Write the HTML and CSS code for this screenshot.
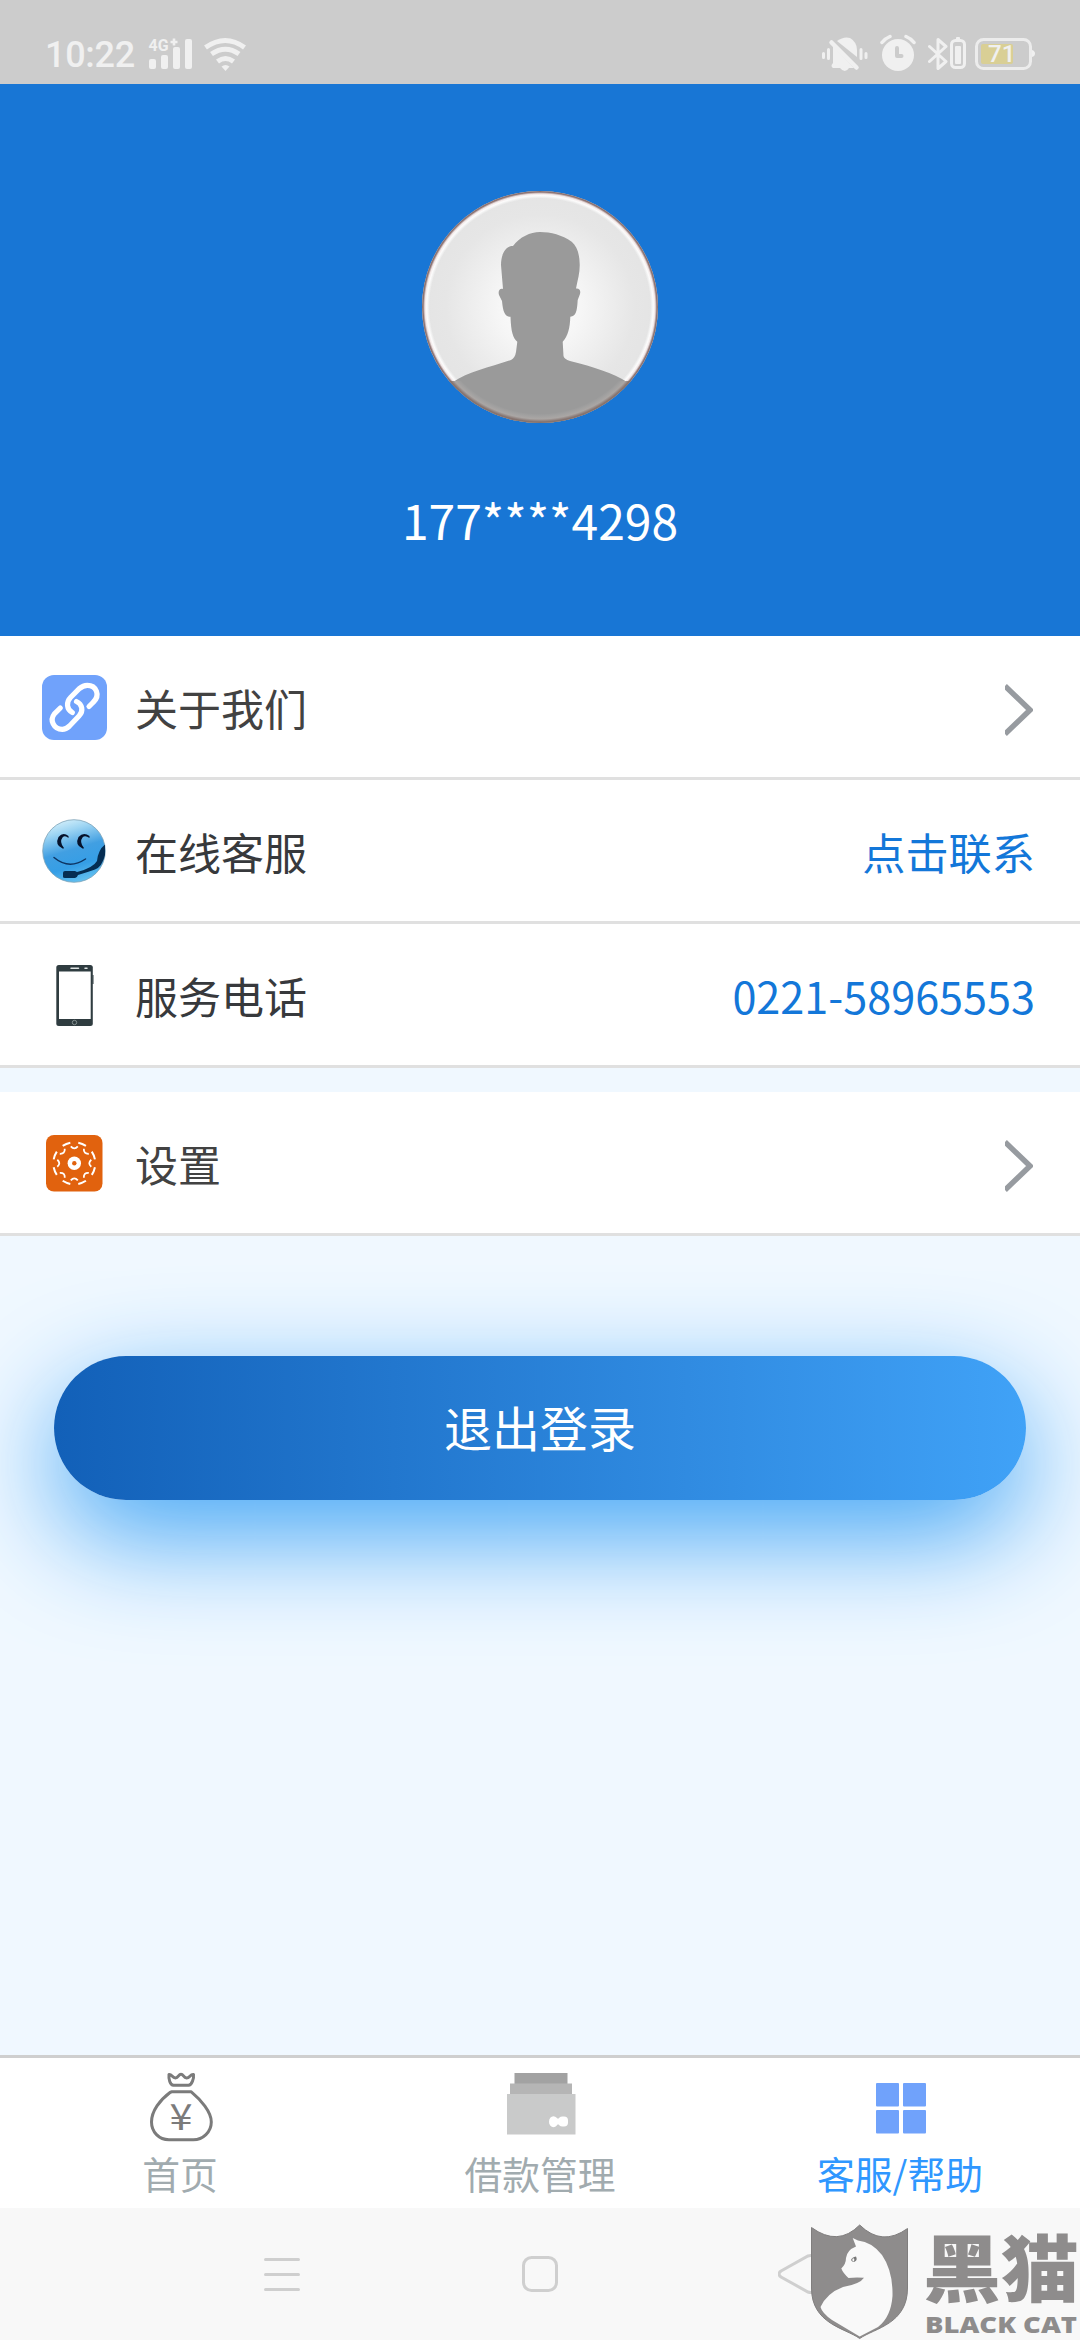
FILE: index.html
```html
<!DOCTYPE html>
<html lang="zh-CN">
<head>
    <meta charset="UTF-8">
    <meta name="viewport" content="width=device-width, initial-scale=1.0">
    <title>客服/帮助</title>
    <link rel="stylesheet" href="styles.css">
</head>
<body>
    <div class="status-bar">
        <span class="time">10:22</span>
        <svg class="signal" width="45" height="40" viewBox="148 34 45 40">
            <text class="net" x="148.5" y="51" textLength="20" lengthAdjust="spacingAndGlyphs">4G</text>
            <path d="M174 38.500v7M170.500 42h7" stroke="#f0f0f0" stroke-width="2.600"/>
            <rect x="149" y="59" width="7" height="10" rx="2"/>
            <rect x="161" y="55" width="7" height="14" rx="2"/>
            <rect x="173" y="47" width="7" height="22" rx="2"/>
            <rect x="185" y="39" width="7" height="30" rx="2"/>
        </svg>
        <svg class="wifi" width="44" height="40" viewBox="203 34 44 40">
            <g fill="none" stroke="#f0f0f0" stroke-width="5">
                <path d="M205.500 47.500Q225.500 33.500 244.500 47.500"/>
                <path d="M211.500 54Q225.500 44.500 239 54"/>
                <path d="M217.500 61.500Q225.500 55.500 233.500 61.500"/>
            </g>
            <path d="M221.500 66.500Q225.500 63.500 229.500 66.500L225.500 71z"/>
        </svg>

        <div class="status-right">
            <svg width="46" height="40" viewBox="822 34 46 40">
                <path d="M837 41Q844 36 850 38Q857 42 857 50V57z"/>
                <path d="M833 46L854 68Q850 68 849 68Q845 74 840 68H833Q830 66 833 63z"/>
                <path d="M831.500 42.500L856.500 67.500" stroke="#f0f0f0" stroke-width="4.500" stroke-linecap="round"/>
                <path d="M823.500 53.500v4M828.500 49.500v9M861 49.500v9M866 53.500v4" stroke="#f0f0f0" stroke-width="3" stroke-linecap="round"/>
            </svg>
            <svg width="36" height="40" viewBox="880 34 36 40">
                <circle cx="898" cy="55" r="16"/>
                <path d="M882 42.500Q885 38.500 890 36.500M914 42.500Q911 38.500 906 36.500" fill="none" stroke="#f0f0f0" stroke-width="3.500" stroke-linecap="round"/>
                <path d="M897 48v8h4.500" fill="none" stroke="#ccc" stroke-width="4" stroke-linecap="round" stroke-linejoin="round"/>
            </svg>
            <svg width="38" height="40" viewBox="928 34 38 40">
                <path d="M929.500 46.500L946 61.500L938 68.500V39.500L946 46.500L929.500 61.500" fill="none" stroke="#f0f0f0" stroke-width="3" stroke-linejoin="round" stroke-linecap="round"/>
                <rect x="951.500" y="40.500" width="13" height="27" rx="4" fill="none" stroke="#f0f0f0" stroke-width="3"/>
                <rect x="956" y="37" width="4" height="4" rx="1"/>
                <rect x="955" y="46" width="6" height="18" rx="1"/>
            </svg>
            <svg class="battery" width="60" height="40" viewBox="975 34 60 40">
                <rect x="976.500" y="39.500" width="54" height="29" rx="7" fill="none" stroke="#ececec" stroke-width="3"/>
                <rect x="981" y="44" width="32" height="20" rx="2" fill="#d9cf95"/>
                <path d="M1032 50q3 1 3 3.500t-3 3.500z"/>
                <text class="percent" x="988" y="62">71</text>
            </svg>
        </div>
    </div>

    <div class="profile">
        <svg class="avatar" width="236" height="232" viewBox="0 0 236 232">
            <defs>
                <radialGradient id="face-bg">
                    <stop offset="0" stop-color="#ffffff"/>
                    <stop offset="0.35" stop-color="#f6f6f6"/>
                    <stop offset="0.8" stop-color="#e6e6e6"/>
                    <stop offset="1" stop-color="#e4e4e4"/>
                </radialGradient>
                <radialGradient id="rim">
                    <stop offset="0.935" stop-color="#fff" stop-opacity="0"/>
                    <stop offset="0.96" stop-color="#fff" stop-opacity="0.9"/>
                    <stop offset="0.975" stop-color="#f3e8e8" stop-opacity="0.9"/>
                    <stop offset="0.99" stop-color="#8d7474"/>
                    <stop offset="1" stop-color="#8a7272"/>
                </radialGradient>
                <radialGradient id="rim-low">
                    <stop offset="0.92" stop-color="#aaa" stop-opacity="0"/>
                    <stop offset="0.965" stop-color="#aaa6a4"/>
                    <stop offset="0.99" stop-color="#85736f"/>
                </radialGradient>
                <clipPath id="avatar-clip"><ellipse cx="118" cy="116" rx="118" ry="116"/></clipPath>
                <clipPath id="low-clip"><rect x="0" y="190" width="236" height="42"/></clipPath>
            </defs>
            <ellipse cx="118" cy="116" rx="118" ry="116" fill="url(#face-bg)"/>
            <ellipse cx="118" cy="116" rx="118" ry="116" fill="url(#rim)"/>
            <path clip-path="url(#avatar-clip)" fill="#9a9a9a" d="M118 41C108 41 98 46 91 55C83 55 79 64 79 74L81 98C77 97 76 101 77 104L80 110C81 121 83 126 88.500 125.700C89 141 91 147 95.300 150.700L94 161Q93 167 89 169C68 176 46 181 31 191L10 232H226L205 191C191 182 172 176 148 170Q142 168 141.500 165L140.700 150.700C146 145 148 137 148.300 125.700C154 125 155 121 155.700 109L158 103C159 99 157 97 154 97.500C156 88 158 81 157.700 73C157.500 63 155 55 149.700 50.700C140 44 129 41 118 41Z"/>
            <ellipse clip-path="url(#low-clip)" cx="118" cy="116" rx="118" ry="116" fill="url(#rim-low)"/>
        </svg>
        <div class="phone">177****4298</div>
    </div>

    <div class="menu">
        <div class="row">
            <svg class="row-icon" viewBox="0 0 66 66">
                <rect x="0" y="1" width="65" height="65" rx="12" fill="#70a2fb"/>
                <g fill="none" stroke="#fff" stroke-width="5.200" stroke-linecap="round">
                    <path d="M47 32.500L51 28.500C59 21 54 11.300 45.300 11.300Q41 11.300 37.500 14.500L28.500 23.500C24 28 24.500 35.500 30.300 38.500"/>
                    <path d="M34.500 27.500C40 30 42 37 37 42L27.500 52Q24 55.300 20.300 55.300C11.500 55.300 7.500 46 12.300 40L18.300 34"/>
                </g>
            </svg>
            <span class="label">关于我们</span>
            <svg class="arrow" viewBox="0 0 28 54"><path d="M0 3L25 27L0 51" /></svg>
        </div>
        <div class="row">
            <svg class="row-icon" viewBox="0 0 66 66">
                <defs>
                    <linearGradient id="smile-bg" x1="0.25" y1="0" x2="0.55" y2="1">
                        <stop offset="0" stop-color="#d8f1fb"/>
                        <stop offset="0.2" stop-color="#9ed5f3"/>
                        <stop offset="0.5" stop-color="#419fe2"/>
                        <stop offset="0.75" stop-color="#359ee6"/>
                        <stop offset="1" stop-color="#62c0f0"/>
                    </linearGradient>
                </defs>
                <circle cx="32" cy="33" r="31.3" fill="url(#smile-bg)" stroke="#7fa3b8" stroke-width="0.8"/>
                <path fill="#06122b" d="M26.500 18Q21 13.500 16.500 19Q12.500 27 20.500 30.500Q22 30.500 22 30Q17 24 20.500 19.500Q23 17 26.500 20zM47.500 18Q41.500 13.500 36.500 19Q32.500 27 40.500 30.500Q42 30.500 42 30Q37 24 40.500 19.500Q43 17 47.500 20z"/>
                <path fill="none" stroke="#0e3563" stroke-width="1.500" stroke-linecap="round" d="M12 39.500Q27 52 43.500 41"/>
                <path fill="#052d52" d="M63 26.500Q56 32 55 43Q51 50 35 54L33 53H23Q21 53 21 55V59Q21 60 23 60H33Q35 60 36 57Q46 54 53 51.500Q60 49 63 37z"/>
            </svg>
            <span class="label dark">在线客服</span>
            <span class="value">点击联系</span>
        </div>
        <div class="row">
            <svg class="row-icon" viewBox="0 0 66 66">
                <rect x="14.300" y="3" width="36.500" height="61" rx="2.500" fill="#2f3c40"/>
                <rect x="50.500" y="13" width="1" height="9" fill="#2f3c40"/>
                <rect x="17" y="9.500" width="31.700" height="47.500" fill="#fff"/>
                <path d="M29 6.300h7.500M43 6.300h2" stroke="#dfe4e4" stroke-width="1.500" stroke-linecap="round"/>
                <circle cx="32.500" cy="60.500" r="2.200" fill="none" stroke="#8c9797" stroke-width="0.900"/>
            </svg>
            <span class="label dark">服务电话</span>
            <span class="value">0221-58965553</span>
        </div>
    </div>

    <div class="menu second">
        <div class="row">
            <svg class="row-icon" viewBox="0 0 66 66">
                <rect x="4" y="5" width="56.500" height="56.500" rx="8" fill="#e1620e"/>
                <g transform="translate(32.300 33.300)">
                    <circle r="21" fill="none" stroke="#fff" stroke-width="2" pathLength="80" stroke-dasharray="5 5" stroke-dashoffset="-2.500"/>
                    <g fill="none" stroke="#fff" stroke-width="1.800">
                        <path id="tooth" d="M-3.500-17Q0-13 3.500-17"/>
                        <use href="#tooth" transform="rotate(45)"/>
                        <use href="#tooth" transform="rotate(90)"/>
                        <use href="#tooth" transform="rotate(135)"/>
                        <use href="#tooth" transform="rotate(180)"/>
                        <use href="#tooth" transform="rotate(225)"/>
                        <use href="#tooth" transform="rotate(270)"/>
                        <use href="#tooth" transform="rotate(315)"/>
                    </g>
                    <circle r="6.700" fill="#fff"/>
                    <circle r="2.200" fill="#e1620e"/>
                </g>
            </svg>
            <span class="label">设置</span>
            <svg class="arrow" viewBox="0 0 28 54"><path d="M0 3L25 27L0 51" /></svg>
        </div>
    </div>

    <button class="logout">退出登录</button>

    <div class="tab-bar">
        <div class="tab">
            <svg width="72" height="72" viewBox="0 0 72 72">
                <g fill="none" stroke="#7b7b7b" stroke-width="3" stroke-linejoin="round">
                    <path d="M25 2.500C28 2 28 6 31.500 6C34.500 6 34.500 2.200 37 2.200S39.500 6 42.500 6C46 6 46 2 49.500 2.500C50 6 48 13 44.500 13.300H29.500C26 13 24.500 7 25 2.500Z"/>
                    <path d="M28 19.700H47C57 28 67.300 40 67.300 50C67.300 60 59 67.700 49.300 67.700H25C15 67.700 7.500 60 7.500 50C7.500 39 16 28 26 20.500Z"/>
                </g>
                <text class="yen" x="25.5" y="58" textLength="23" lengthAdjust="spacingAndGlyphs">¥</text>
            </svg>
            <span>首页</span>
        </div>
        <div class="tab">
            <svg width="72" height="72" viewBox="0 0 72 72">
                <rect x="10.500" y="1" width="53" height="11" fill="#a2a2a2"/>
                <rect x="6" y="11.500" width="62" height="11" fill="#b5b5b5"/>
                <rect x="3" y="22" width="68.500" height="40.500" fill="#c9caca"/>
                <ellipse cx="49.500" cy="49.700" rx="4.500" ry="5.500" fill="#fff"/>
                <rect x="52" y="46.500" width="6" height="6" fill="#fff"/>
                <rect x="54.500" y="44.500" width="9.500" height="10" rx="4" fill="#fff"/>
            </svg>
            <span>借款管理</span>
        </div>
        <div class="tab active">
            <svg width="72" height="72" viewBox="0 0 72 72" fill="#70a2fb">
                <rect x="12" y="11" width="23" height="23.500" rx="1"/>
                <rect x="39" y="11" width="23" height="23.500" rx="1"/>
                <rect x="12" y="38" width="23" height="23.500" rx="1"/>
                <rect x="39" y="38" width="23" height="23.500" rx="1"/>
            </svg>
            <span>客服/帮助</span>
        </div>
    </div>

    <div class="nav-bar">
        <svg viewBox="0 0 40 40"><path d="M3.500 5.500h33M3.500 20.500h33M3.500 35.500h33"/></svg>
        <svg viewBox="0 0 40 40"><rect x="3.500" y="3.500" width="33" height="33" rx="8"/></svg>
        <svg viewBox="0 0 40 40"><path d="M3 17L30 2Q36 0 36 6V34Q36 40 30 38L3 23Q-1 20 3 17Z"/></svg>
    </div>

    <svg class="watermark" width="280" height="124" viewBox="0 0 280 124">
        <path fill="#8e8c8c" stroke="#807e7e" stroke-width="1" d="M11.500 11.500Q38 31 59.700 9Q82 31 107.500 12.500V72C107.500 108 75 112 59.700 122.500C45 112 11.500 108 11.500 72Z"/>
        <path fill="#f9f9f9" d="M52.700 22L58 24.500Q72 26 82 39Q93 55 92.500 80Q91 101 78 111L59.700 120.500L32 104Q22 97 20.500 91Q27 77 43 71Q60 68 64 61.700Q55 61 48.500 62Q43 57 41.300 52.500Q46 48 46 42Q47 34 56 30.500Z"/>
        <path fill="#777" d="M51 44q1-3 5-3.500q2 4-2 5.500q-2 0-3-2z"/>
        <ellipse cx="53.300" cy="43.800" rx="1" ry="1.600" fill="#f9f9f9"/>
        <text class="mark-cn" x="123" y="80" textLength="156" lengthAdjust="spacingAndGlyphs">黑猫</text>
        <text class="mark-en" x="125" y="116.500" textLength="152" lengthAdjust="spacingAndGlyphs">BLACK CAT</text>
    </svg>
</body>
</html>
```
FILE: styles.css
```css
* {
    margin: 0;
    padding: 0;
    box-sizing: border-box;
}

body {
    width: 1080px;
    height: 2340px;
    display: flex;
    flex-direction: column;
    position: relative;
    overflow: hidden;
    background: #f0f8ff;
    font-family: "Noto Sans CJK SC", sans-serif;
    font-size: 43.2px;
    color: #424242;
}

svg {
    display: block;
    flex: none;
}

/* Status bar */
.status-bar {
    height: 84px;
    padding: 34px 45px 0 45px;
    display: flex;
    align-items: flex-start;
    background: #ccc;
    color: #f0f0f0;
    fill: #f0f0f0;
}

.time {
    width: 103px;
    font-family: Roboto, sans-serif;
    font-size: 36px;
    font-weight: 500;
    line-height: 43px;
    letter-spacing: -0.3px;
}

.net {
    font-family: Roboto, sans-serif;
    font-size: 17px;
    font-weight: 700;
}

.wifi {
    margin-left: 10px;
}

.status-right {
    margin-left: auto;
    display: flex;
    gap: 12px;
}

.battery {
    margin-left: -3px;
}

.percent {
    font-family: Roboto, sans-serif;
    font-size: 24px;
    font-weight: 500;
}

/* Profile header */
.profile {
    height: 552px;
    padding-top: 107px;
    display: flex;
    flex-direction: column;
    align-items: center;
    background: #1876d5;
}

.phone {
    margin-top: 60px;
    font-size: 48px;
    line-height: 72px;
    color: #fff;
}

/* List rows */
.menu.second {
    margin-top: 24px;
}

.row {
    height: 144px;
    padding: 1px 45px 0 42px;
    display: flex;
    align-items: center;
    background: #fff;
    border-bottom: 3px solid #e0e0e0;
}

.row-icon {
    width: 66px;
    height: 66px;
    margin-right: 27px;
}

.label {
    flex: 1;
    font-size: 43px;
}

.label.dark {
    color: #37393c;
}

.value {
    color: #1377d9;
}

.arrow {
    width: 28px;
    height: 54px;
    margin: 5px 2px 0 0;
    fill: none;
    stroke: #979ba0;
    stroke-width: 5.5;
}

/* Logout button */
.logout {
    height: 144px;
    margin: 120px 54px 0;
    padding-bottom: 4px;
    border: none;
    border-radius: 72px;
    background: linear-gradient(90deg, #1260b8, #40a2f7);
    box-shadow: 0 36px 108px #42a5f5;
    font-family: inherit;
    font-size: 48px;
    color: #fff;
}

/* Bottom tabs */
.tab-bar {
    height: 153px;
    margin-top: auto;
    padding-top: 14px;
    display: flex;
    position: relative;
    background: #fff;
    border-top: 3px solid #cfcfcf;
}

.tab {
    flex: 1;
    display: flex;
    flex-direction: column;
    align-items: center;
    font-size: 37.8px;
    line-height: 58px;
    color: #a1abaf;
}

.tab.active {
    color: #2f97ff;
}

.yen {
    font-size: 36px;
    fill: #7b7b7b;
}

/* System navigation */
.nav-bar {
    height: 132px;
    display: flex;
    justify-content: center;
    align-items: center;
    gap: 218px;
    background: #f8f8f8;
}

.nav-bar svg {
    width: 40px;
    height: 40px;
    fill: none;
    stroke: #cfcfcf;
    stroke-width: 3;
    stroke-linecap: round;
}

.watermark {
    position: absolute;
    right: 0;
    bottom: 0;
    fill: #8e8c8c;
}

.mark-cn {
    font-size: 73px;
    font-weight: 900;
}

.mark-en {
    font-family: "Open Sans", "Liberation Sans", sans-serif;
    font-size: 22.5px;
    font-weight: 800;
}
```
